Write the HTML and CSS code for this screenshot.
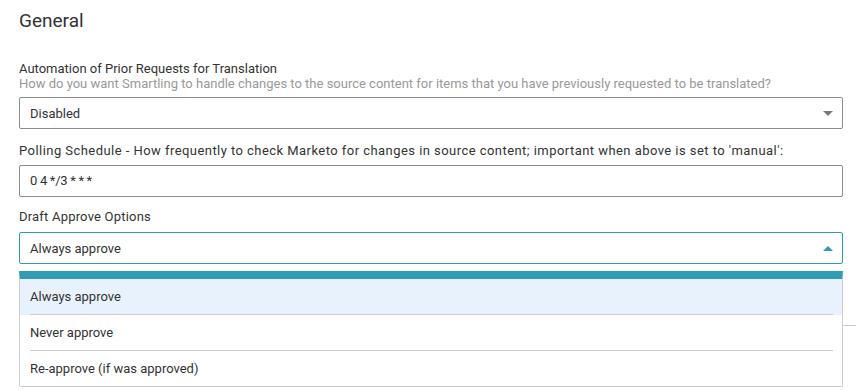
FILE: index.html
```html
<!DOCTYPE html>
<html lang="en">
<head>
<meta charset="utf-8">
<title>General</title>
<link rel="stylesheet" href="styles.css">
</head>
<body>
<div class="page">
  <h2 class="title">General</h2>

  <div class="field first">
    <div class="label">Automation of Prior Requests for Translation</div>
    <div class="hint">How do you want Smartling to handle changes to the source content for items that you have previously requested to be translated?</div>
    <div class="select">
      <span>Disabled</span>
      <svg class="caret" width="10" height="5" viewBox="0 0 10 5"><path d="M0 0H10L5 5Z" fill="#7a7a7a"/></svg>
    </div>
  </div>

  <div class="field second">
    <div class="label wide">Polling Schedule - How frequently to check Marketo for changes in source content; important when above is set to 'manual':</div>
    <div class="input"><span class="cron">0 4 */3 * * *</span></div>
  </div>

  <div class="field third">
    <div class="label mid">Draft Approve Options</div>
    <div class="dropdown">
      <div class="select open">
        <span>Always approve</span>
        <svg class="caret" width="10" height="5" viewBox="0 0 10 5"><path d="M0 5H10L5 0Z" fill="#2f9cb4"/></svg>
      </div>
      <ul class="menu">
        <li class="option active"><div class="option-text">Always approve</div></li>
        <li class="option"><div class="option-text">Never approve</div></li>
        <li class="option last"><div class="option-text">Re-approve (if was approved)</div></li>
      </ul>
    </div>
  </div>

  <div class="section-rule"></div>
</div>
</body>
</html>
```

FILE: styles.css
```css
* {
  box-sizing: border-box;
}

html, body {
  margin: 0;
  padding: 0;
  background: #ffffff;
  min-height: 391px;
}

body {
  font-family: Roboto, "Liberation Sans", Arial, sans-serif;
  color: #333333;
  font-size: 13px;
}

.page {
  padding: 9px 13px 0 19px;
  width: 856px;
  min-height: 391px;
}

.title {
  margin: 0;
  font-size: 19px;
  line-height: 24px;
  font-weight: 400;
  color: #333333;
}

.field {
  display: flex;
  flex-direction: column;
}

.field.first {
  margin-top: 28px;
}

.field.second {
  margin-top: 14px;
}

.field.third {
  margin-top: 12px;
}

.label {
  line-height: 15px;
  color: #333333;
}

.label.wide {
  letter-spacing: 0.45px;
}

.label.mid {
  letter-spacing: 0.2px;
}

.hint {
  line-height: 15px;
  color: #999999;
}

.select,
.input {
  margin-top: 7px;
  height: 32px;
  border: 1px solid #8c8c8c;
  border-radius: 2px;
  padding: 0 9px 0 10px;
  display: flex;
  align-items: center;
  justify-content: space-between;
  line-height: 30px;
  color: #333333;
  background: #ffffff;
}

.select > span {
  position: relative;
  top: 0.5px;
}

.cron {
  letter-spacing: -0.3px;
}

.field.first .select {
  margin-top: 6px;
}

.field.third .dropdown {
  margin-top: 8px;
  position: relative;
}

.dropdown .select {
  margin-top: 0;
}

.select.open {
  border-color: #2f9cb4;
}

.caret {
  display: block;
  flex: none;
}

.menu {
  position: absolute;
  left: 0;
  right: 0;
  top: calc(100% + 7px);
  margin: 0;
  padding: 0;
  list-style: none;
  background: #ffffff;
  border: 1px solid #cccccc;
  border-top: 8px solid #2f9db6;
  border-radius: 0 0 2px 2px;
  z-index: 2;
}

.option {
  padding: 0 9px 0 10px;
}

.option.active {
  background: #e8f2fc;
}

.option-text {
  height: 36px;
  line-height: 35px;
  border-bottom: 1px solid #cccccc;
  color: #333333;
}

.option.last .option-text {
  border-bottom: none;
  height: 35px;
}

.section-rule {
  margin-top: 61px;
  margin-right: -13px;
  margin-left: 200px;
  border-top: 1px solid #cccccc;
}
```
